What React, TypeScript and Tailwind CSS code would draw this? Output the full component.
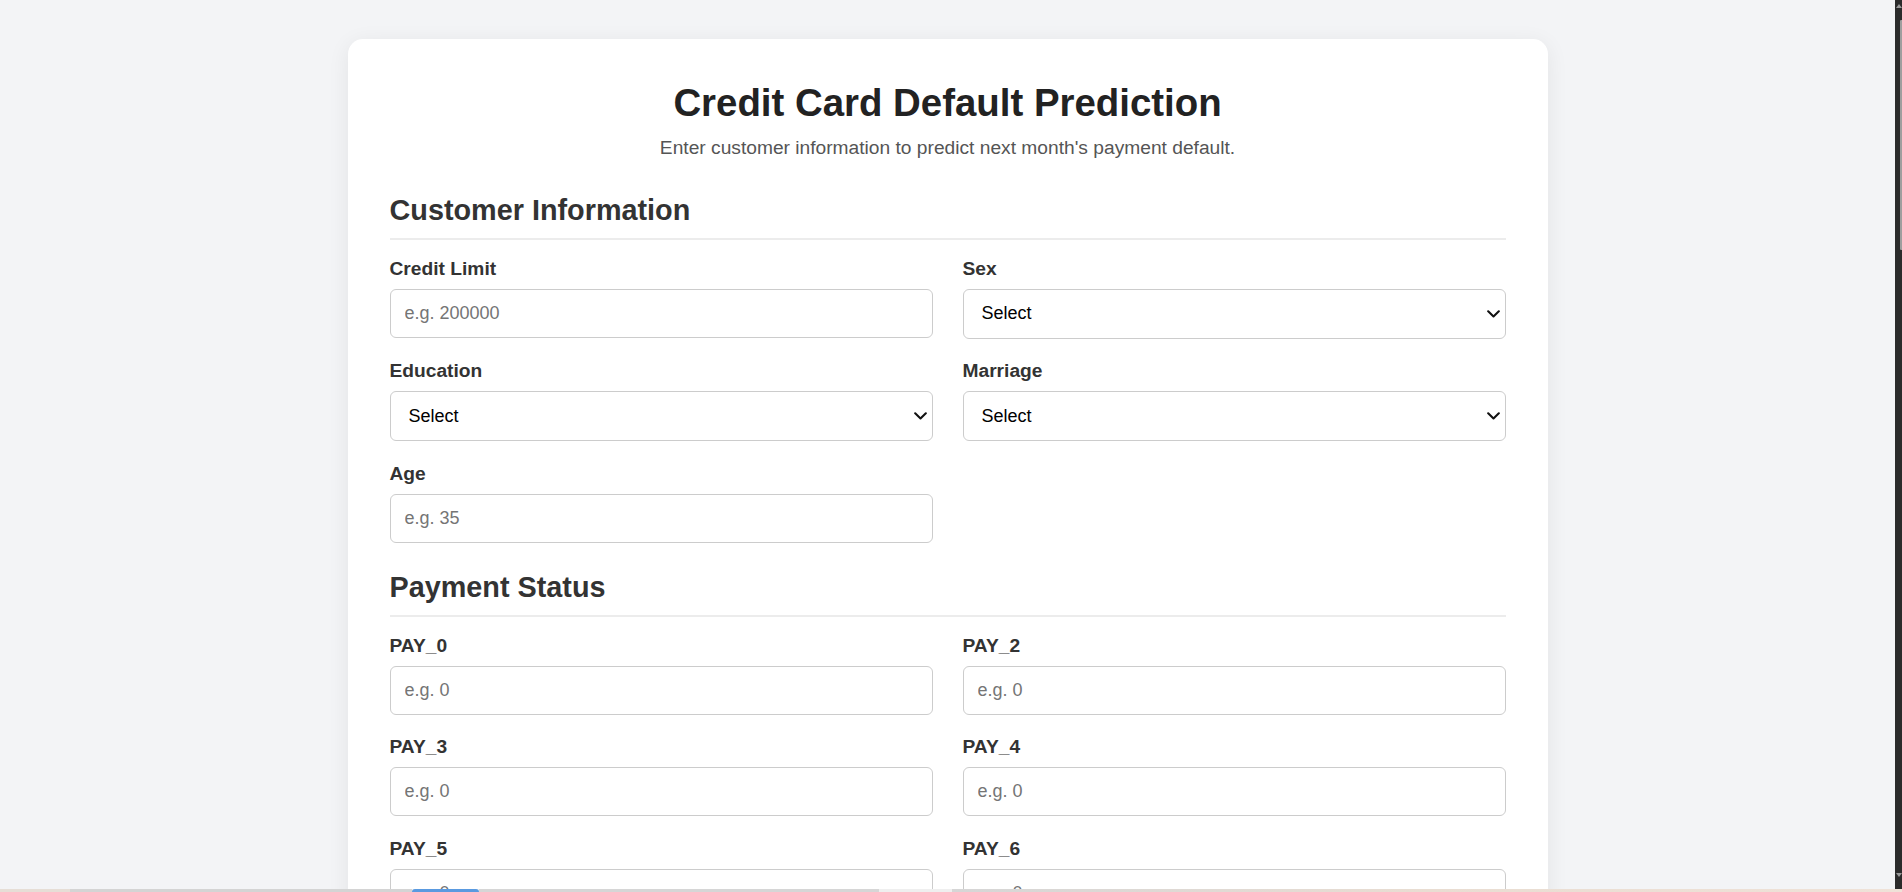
import React from "react";

const FONT = { fontFamily: '"Liberation Sans", Arial, Helvetica, sans-serif' };

type Field =
  | { kind: "input"; label: string; placeholder: string }
  | { kind: "select"; label: string; options: string[] };

function Chevron() {
  return (
    <svg
      className="pointer-events-none absolute right-[6px] top-1/2 -translate-y-1/2"
      width="13"
      height="8"
      viewBox="0 0 13 8"
      fill="none"
    >
      <path d="M1.2 1.3 L6.5 6.4 L11.8 1.3" stroke="#111" strokeWidth="2.1" strokeLinecap="round" strokeLinejoin="round" />
    </svg>
  );
}

function FieldBox({ f }: { f: Field }) {
  return (
    <div className="flex flex-col">
      <label className="mb-[9px] block text-[19.2px] font-bold leading-[22px] text-[#333]">{f.label}</label>
      {f.kind === "input" ? (
        <input
          type="text"
          placeholder={f.placeholder}
          className="h-[49px] w-full rounded-[6px] border border-[#ccc] bg-white px-[14px] text-[18px] text-[#222] outline-none placeholder:text-[#757575]"
          style={FONT}
        />
      ) : (
        <div className="relative">
          <select
            defaultValue=""
            className="h-[50px] w-full appearance-none rounded-[6px] border border-[#ccc] bg-white pl-[18px] pr-[24px] text-[18px] text-black outline-none"
            style={FONT}
          >
            <option value="">Select</option>
            {f.options.map((o) => (
              <option key={o} value={o}>
                {o}
              </option>
            ))}
          </select>
          <Chevron />
        </div>
      )}
    </div>
  );
}

function Section({ title, fields, mt }: { title: string; fields: Field[]; mt: string }) {
  return (
    <section className={mt}>
      <h2 className="border-b-2 border-[#ececec] pb-[11px] text-[28.8px] font-bold leading-[33px] text-[#333]">{title}</h2>
      <div className="mt-[17.5px] grid grid-cols-2 gap-x-[30px] gap-y-[21.5px]">
        {fields.map((f) => (
          <FieldBox key={f.label} f={f} />
        ))}
      </div>
    </section>
  );
}

const customer: Field[] = [
  { kind: "input", label: "Credit Limit", placeholder: "e.g. 200000" },
  { kind: "select", label: "Sex", options: ["Male", "Female"] },
  { kind: "select", label: "Education", options: ["Graduate School", "University", "High School", "Others"] },
  { kind: "select", label: "Marriage", options: ["Married", "Single", "Others"] },
  { kind: "input", label: "Age", placeholder: "e.g. 35" },
];

const payment: Field[] = ["PAY_0", "PAY_2", "PAY_3", "PAY_4", "PAY_5", "PAY_6"].map((l) => ({
  kind: "input" as const,
  label: l,
  placeholder: "e.g. 0",
}));

const bills: Field[] = ["BILL_AMT1", "BILL_AMT2", "BILL_AMT3", "BILL_AMT4", "BILL_AMT5", "BILL_AMT6"].map((l) => ({
  kind: "input" as const,
  label: l,
  placeholder: "e.g. 50000",
}));

export default function App() {
  return (
    <div className="flex h-[892px] w-full flex-col overflow-hidden bg-[#f3f4f6]" style={FONT}>
      <div className="flex h-[889px] w-full">
        <main className="h-full flex-1 overflow-hidden">
          <div className="mx-auto mt-[39px] w-[1200px] rounded-[15px] bg-white px-[42px] pb-[42px] pt-[42px] shadow-[0_4px_22px_rgba(0,0,0,0.07)]">
            <h1 className="mb-[12px] text-center text-[38.4px] font-bold leading-[44px] text-[#222]">
              Credit Card Default Prediction
            </h1>
            <p className="text-center text-[19.2px] leading-[22px] text-[#555]">
              Enter customer information to predict next month's payment default.
            </p>
            <Section title="Customer Information" fields={customer} mt="mt-[35px]" />
            <Section title="Payment Status" fields={payment} mt="mt-[28.5px]" />
            <Section title="Bill Amounts" fields={bills} mt="mt-[28.5px]" />
          </div>
        </main>
        <div className="relative h-full w-[7px] bg-[#2b2b2b]">
          <div className="absolute left-[1px] top-[4px] h-0 w-0 border-x-[3px] border-b-[4px] border-x-transparent border-b-[#9a9a9a]" />
          <div className="absolute right-0 top-[20px] h-[230px] w-[2px] rounded-l-[1px] bg-[#9e9e9e]" />
          <div className="absolute bottom-[12px] left-[1px] h-0 w-0 border-x-[3px] border-t-[4px] border-x-transparent border-t-[#9a9a9a]" />
        </div>
      </div>
      <div className="flex h-[3px] w-full">
        <div className="w-[70px] bg-[#e6ded6]" />
        <div className="w-[342px] bg-[#d4d4d4]" />
        <div className="w-[67px] rounded-t-full bg-[#5a9ae0]" />
        <div className="w-[400px] bg-[#d6d6d6]" />
        <div className="w-[73px] bg-[#efefef]" />
        <div className="flex-1 bg-gradient-to-r from-[#d6d6d6] via-[#e9ddd2] to-[#efe2d8]" />
      </div>
    </div>
  );
}
